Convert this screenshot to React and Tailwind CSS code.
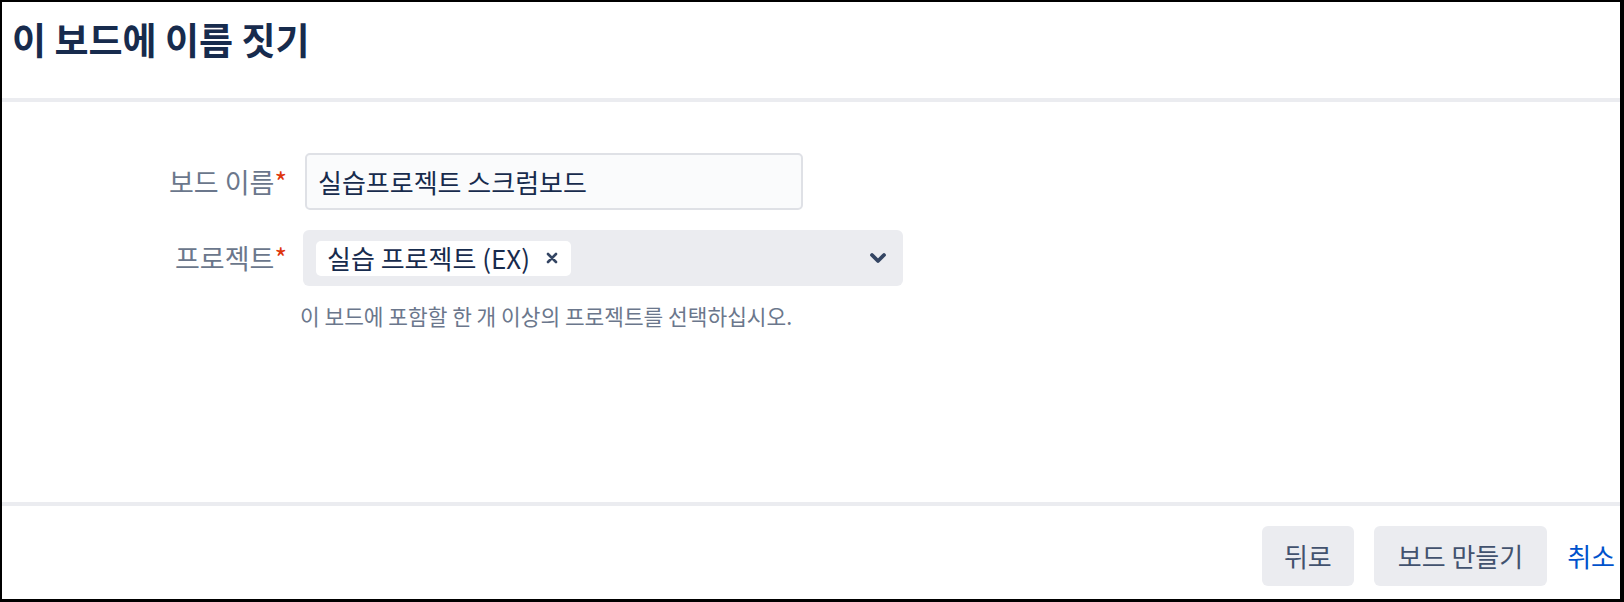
import React from 'react';

const font = "font-['Noto_Sans_CJK_KR','Noto_Sans',sans-serif]";

const FieldLabel = ({ children }) => (
  <div className="w-[285px] shrink-0 text-right text-[27px] leading-[32px] text-[#6b778c]">
    {children}
    <span className="text-[#de350b]">*</span>
  </div>
);

const App = () => {
  return (
    <div className={`${font} flex h-[602px] w-full flex-col border-t-2 border-l-2 border-r-4 border-b-[3px] border-black bg-white`}>
      {/* Header */}
      <div className="h-[96px] shrink-0 px-[10px] pt-[15px]">
        <h1 className="text-[37px] font-semibold leading-[44px] text-[#172b4d]">이 보드에 이름 짓기</h1>
      </div>
      <div className="h-[4px] shrink-0 bg-[#ebecf0]"></div>

      {/* Form body */}
      <div className="flex flex-1 flex-col pt-[51px]">
        <div className="flex items-center gap-[18px]">
          <FieldLabel>보드 이름</FieldLabel>
          <div className="flex h-[57px] w-[498px] items-center rounded-[5px] border-2 border-[#dfe1e6] bg-[#fafbfc] px-[11px]">
            <span className="text-[26px] leading-[32px] text-[#172b4d]">실습프로젝트 스크럼보드</span>
          </div>
        </div>

        <div className="mt-[20px] flex items-center gap-[16px]">
          <FieldLabel>프로젝트</FieldLabel>
          <div className="flex h-[56px] w-[600px] items-center justify-between rounded-[6px] bg-[#ebecf0] pl-[13px] pr-[16px]">
            <div className="flex h-[35px] items-center gap-[16px] rounded-[5px] bg-white pl-[11px] pr-[13px]">
              <span className="text-[26px] leading-[32px] text-[#172b4d]">실습 프로젝트 (EX)</span>
              <svg width="12" height="12" viewBox="0 0 12 12" fill="none">
                <path d="M2 2 L10 10 M10 2 L2 10" stroke="#344563" strokeWidth="2.6" strokeLinecap="round" />
              </svg>
            </div>
            <svg width="18" height="12" viewBox="0 0 18 12" fill="none">
              <path d="M3 3 L9 9 L15 3" stroke="#344563" strokeWidth="3.8" strokeLinecap="round" strokeLinejoin="round" />
            </svg>
          </div>
        </div>

        <p className="ml-[298px] mt-[16px] text-[21.4px] leading-[28px] text-[#6b778c]">
          이 보드에 포함할 한 개 이상의 프로젝트를 선택하십시오.
        </p>
      </div>

      {/* Footer */}
      <div className="h-[4px] shrink-0 bg-[#ebecf0]"></div>
      <div className="flex h-[93px] shrink-0 items-start justify-end gap-[20px] pr-[5px] pt-[20px]">
        <button className="h-[60px] rounded-[6px] bg-[#ebecf0] px-[22px] text-[26px] leading-[30px] text-[#42526e]">뒤로</button>
        <button className="h-[60px] rounded-[6px] bg-[#ebecf0] px-[24px] text-[26px] leading-[30px] text-[#42526e]">보드 만들기</button>
        <button className="h-[60px] text-[26px] leading-[30px] text-[#0052cc]">취소</button>
      </div>
    </div>
  );
};

export default App;
